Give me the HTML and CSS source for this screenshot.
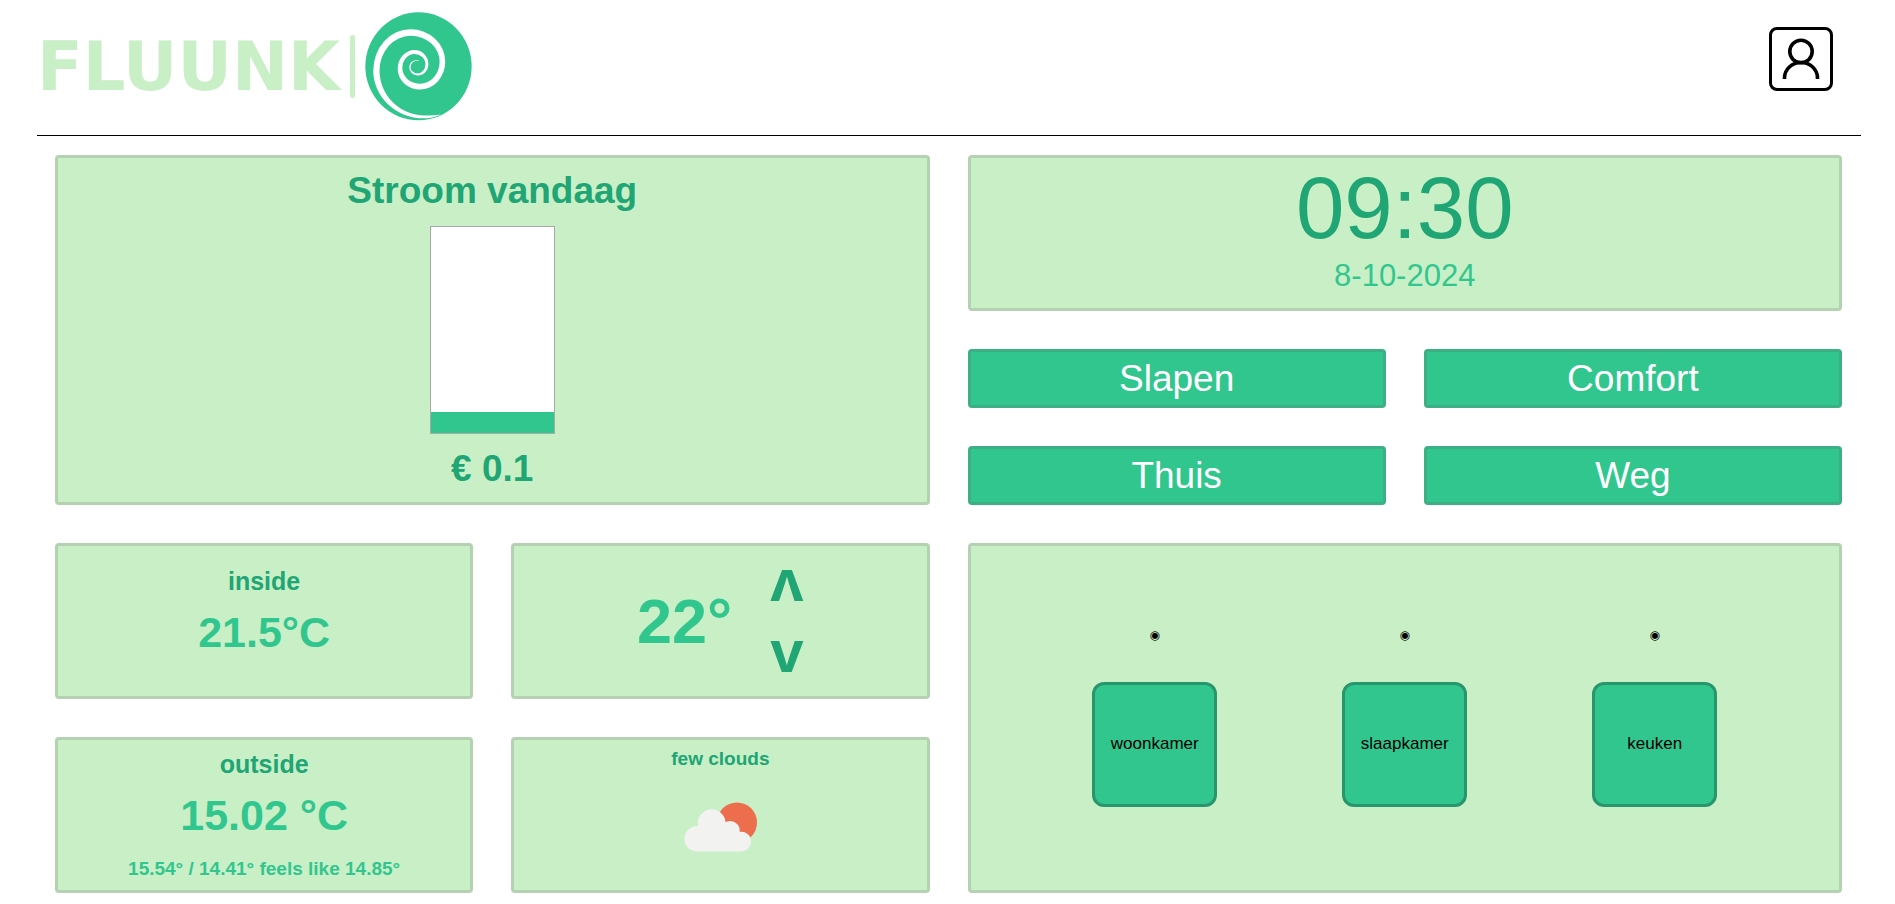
FILE: index.html
```html
<!DOCTYPE html>
<html lang="nl">
<head>
<meta charset="utf-8">
<title>Fluunk</title>
<link rel="stylesheet" href="styles.css">
</head>
<body>
<header class="header">
  <a class="logo" href="#" aria-label="Fluunk">
    <span class="logo-name">FLUUNK</span>
    <span class="logo-bar"></span>
    <svg class="logo-mark" viewBox="108 35 324 330" aria-hidden="true">
      <ellipse cx="270" cy="199.500" rx="161" ry="163.500" fill="#32c68f"/>
      <path fill="#fff" d="M338 345Q312 357 285 357A152 145 0 0 1 133 212A113 125 0 0 1 246 87A105 98 0 0 1 351 185A77 85 0 0 1 274 270A67 63 0 0 1 207 207A51 57 0 0 1 258 150A42 43 0 0 1 300 193A33 34 0 0 1 267 227A25 25 0 0 1 242 202Q243 179 271 180L271 182Q247 182 246 202A21 19 0 0 0 267 221A24 28 0 0 0 291 193A33 31 0 0 0 258 162A37 43 0 0 0 221 205A54 47 0 0 0 275 252A59 67 0 0 0 334 185A88 78 0 0 0 246 107A94 105 0 0 0 152 212A137 136 0 0 0 289 348Q314 349 338 345Z"/>
    </svg>
  </a>
  <button class="account" type="button" aria-label="Account">
    <svg class="account-icon" viewBox="0 0 38 42" fill="none" stroke="#000" stroke-width="3.600" aria-hidden="true">
      <ellipse cx="19" cy="13.500" rx="11.200" ry="11.200"/>
      <path d="M2.500 41V40A16.500 15.500 0 0 1 35.500 40V41"/>
    </svg>
  </button>
</header>

<main class="dashboard">
  <section class="card power">
    <h2 class="title">Stroom vandaag</h2>
    <div class="gauge"><div class="gauge-fill" style="height:10%"></div></div>
    <p class="title">€ 0.1</p>
  </section>

  <section class="card clock">
    <time class="time">09:30</time>
    <time class="date">8-10-2024</time>
  </section>

  <button class="mode" type="button">Slapen</button>
  <button class="mode" type="button">Comfort</button>
  <button class="mode" type="button">Thuis</button>
  <button class="mode" type="button">Weg</button>

  <section class="card climate inside">
    <h3 class="place">inside</h3>
    <p class="degrees">21.5°C</p>
  </section>

  <section class="card thermostat">
    <output class="target">22°</output>
    <div class="steps">
      <button class="step step-up" type="button" aria-label="Warmer">v</button>
      <button class="step" type="button" aria-label="Kouder">v</button>
    </div>
  </section>

  <section class="card rooms">
    <div class="room"><span class="lamp">◉</span><button class="room-button" type="button">woonkamer</button></div>
    <div class="room"><span class="lamp">◉</span><button class="room-button" type="button">slaapkamer</button></div>
    <div class="room"><span class="lamp">◉</span><button class="room-button" type="button">keuken</button></div>
  </section>

  <section class="card climate">
    <h3 class="place">outside</h3>
    <p class="degrees">15.02 °C</p>
    <p class="range">15.54° / 14.41° feels like 14.85°</p>
  </section>

  <section class="card weather">
    <h3 class="sky">few clouds</h3>
    <svg class="sky-icon" viewBox="552 815 222 149" aria-hidden="true">
      <circle cx="714" cy="876" r="60" fill="#ec6e4c"/>
      <path fill="#f2f2f0" d="M591 963A38 38 0 0 1 597 887A42 42 0 1 1 680 875A29 29 0 0 1 722 904A29 29 0 0 1 756 933A30 30 0 0 1 728 963Z"/>
    </svg>
  </section>
</main>
</body>
</html>
```

FILE: styles.css
```css
* {
  box-sizing: border-box;
}

body {
  display: flex;
  flex-direction: column;
  min-height: 100vh;
  margin: 0;
  padding: 0 34px 0 37px;
  background: #fff;
  font-family: "Liberation Sans", Arial, sans-serif;
}

h2,
h3,
p {
  margin: 0;
}

button {
  padding: 0;
  font-family: inherit;
  cursor: pointer;
}

.header {
  display: flex;
  align-items: flex-start;
  justify-content: space-between;
  padding: 12px 28px 14px 0;
  border-bottom: 1px solid #000;
}

.logo {
  display: flex;
  align-items: center;
  gap: 10px;
  color: #c9efc7;
  text-decoration: none;
}

.logo-name {
  font: bold 67px/72px "DejaVu Sans", sans-serif;
}

.logo-bar {
  width: 5px;
  height: 63px;
  border-radius: 3px;
  background: #c9efc7;
}

.logo-mark {
  width: 107px;
  height: 109px;
}

.account {
  display: flex;
  align-items: center;
  justify-content: center;
  width: 64px;
  height: 64px;
  margin-top: 15px;
  border: 3px solid #000;
  border-radius: 8px;
  background: #fff;
}

.account-icon {
  width: 38px;
  height: 42px;
}

.dashboard {
  display: grid;
  flex: 1;
  grid-template-columns: repeat(4, minmax(0, 1fr));
  grid-template-rows: repeat(8, 1fr);
  gap: 38px;
  padding: 19px 19px 11px 18px;
}

.card {
  display: flex;
  grid-row: span 2;
  flex-direction: column;
  align-items: center;
  justify-content: center;
  min-height: 0;
  border: 3px solid #b4d2b2;
  border-radius: 4px;
  background: #c9efc7;
  color: #32c68f;
}

.power {
  grid-row: span 4;
  grid-column: span 2;
  gap: 13px;
}

.title {
  color: #20a574;
  font-size: 37px;
  font-weight: bold;
  line-height: 44px;
}

.gauge {
  display: flex;
  align-items: flex-end;
  width: 125px;
  height: 208px;
  border: 1px solid #a9a9a9;
  background: #fff;
}

.gauge-fill {
  width: 100%;
  background: #32c68f;
}

.clock {
  grid-column: span 2;
  gap: 6px;
  padding-bottom: 8px;
}

.time {
  color: #20a574;
  font-size: 87px;
  line-height: 88px;
}

.date {
  font-size: 31px;
  line-height: 36px;
}

.mode {
  min-height: 0;
  border: 3px solid #3cb084;
  border-radius: 4px;
  background: #32c68f;
  color: #fff;
  font-size: 37px;
  line-height: 44px;
}

.inside {
  padding-bottom: 19px;
}

.place {
  color: #20a574;
  font-size: 25px;
  line-height: 28px;
}

.degrees {
  margin-top: 12px;
  font-size: 43px;
  font-weight: bold;
  line-height: 50px;
}

.range {
  margin-top: 18px;
  font-size: 19px;
  font-weight: bold;
  line-height: 22px;
}

.thermostat {
  flex-direction: row;
  gap: 38px;
}

.target {
  font-size: 63px;
  font-weight: bold;
  line-height: 64px;
}

.steps {
  display: flex;
  flex-direction: column;
}

.step {
  height: 61px;
  border: 0;
  background: none;
  color: #20a574;
  font-size: 60px;
  font-weight: bold;
  line-height: 61px;
}

.step-up {
  transform: rotate(180deg);
}

.rooms {
  grid-row: span 4;
  grid-column: span 2;
  flex-direction: row;
  gap: 125px;
  padding-bottom: 5px;
}

.room {
  display: flex;
  flex-direction: column;
  align-items: center;
  gap: 37px;
}

.lamp {
  color: #000;
  font: 12px/20px "DejaVu Sans", sans-serif;
}

.room-button {
  width: 125px;
  height: 125px;
  border: 3px solid #28966d;
  border-radius: 12px;
  background: #32c68f;
  color: #000;
  font-size: 17px;
}

.weather {
  gap: 32px;
  justify-content: flex-start;
  padding-top: 8px;
}

.sky {
  color: #20a574;
  font-size: 19px;
  line-height: 22px;
}

.sky-icon {
  width: 74px;
  height: 50px;
}
```
